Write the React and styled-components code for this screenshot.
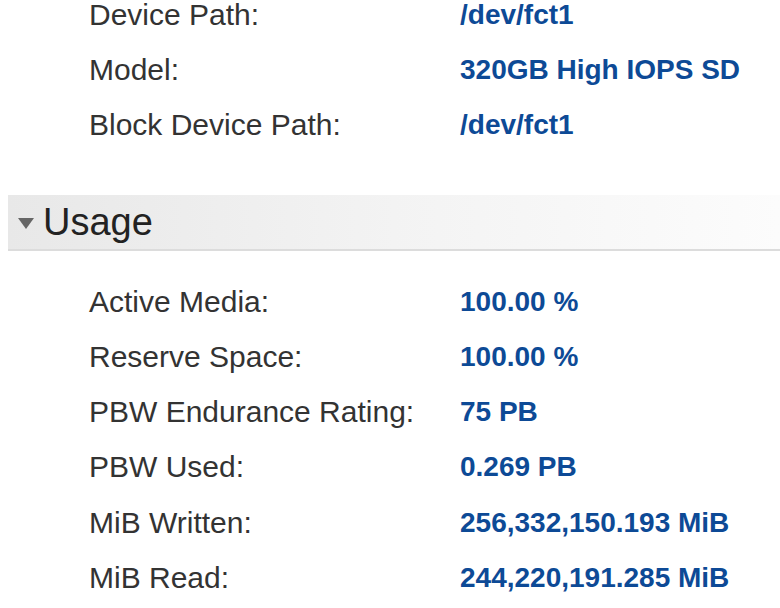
import React from "react";
import styled, { createGlobalStyle } from "styled-components";

const GlobalStyle = createGlobalStyle`
  html, body {
    margin: 0;
    padding: 0;
    background: #ffffff;
    font-family: "Liberation Sans", Arial, sans-serif;
  }
`;

const Page = styled.div`
  width: 780px;
  height: 608px;
  overflow: hidden;
  margin-top: -13px;
`;

const PropList = styled.div`
  display: flex;
  flex-direction: column;
  padding-left: 89px;
  margin-bottom: ${(p) => p.gapAfter || 0}px;
`;

const PropRow = styled.div`
  display: grid;
  grid-template-columns: 371px 1fr;
  height: 55.3px;
  align-items: center;
`;

const Label = styled.span`
  font-size: 30px;
  color: #333333;
  white-space: nowrap;
`;

const Value = styled.span`
  font-size: 28px;
  font-weight: bold;
  color: #0d4a96;
  white-space: nowrap;
`;

const SectionHeader = styled.div`
  display: flex;
  align-items: center;
  margin-left: 8px;
  height: 54px;
  border-bottom: 2px solid #dcdcdc;
  background: linear-gradient(to right, #e8e8e8 0%, #f3f3f3 50%, #fcfcfc 100%);
  margin-bottom: 23px;
`;

const Caret = styled.span`
  width: 0;
  height: 0;
  margin-left: 10px;
  margin-right: 9px;
  margin-top: 3px;
  border-left: 8px solid transparent;
  border-right: 8px solid transparent;
  border-top: 11px solid #666666;
`;

const SectionTitle = styled.span`
  font-size: 38px;
  color: #222222;
  line-height: 1;
`;

const device = [
  ["Device Path:", "/dev/fct1"],
  ["Model:", "320GB High IOPS SD"],
  ["Block Device Path:", "/dev/fct1"],
];

const usage = [
  ["Active Media:", "100.00 %"],
  ["Reserve Space:", "100.00 %"],
  ["PBW Endurance Rating:", "75 PB"],
  ["PBW Used:", "0.269 PB"],
  ["MiB Written:", "256,332,150.193 MiB"],
  ["MiB Read:", "244,220,191.285 MiB"],
];

function Props({ rows, gapAfter }) {
  return (
    <PropList gapAfter={gapAfter}>
      {rows.map(([k, v]) => (
        <PropRow key={k}>
          <Label>{k}</Label>
          <Value>{v}</Value>
        </PropRow>
      ))}
    </PropList>
  );
}

export default function App() {
  return (
    <Page>
      <GlobalStyle />
      <Props rows={device} gapAfter={42} />
      <SectionHeader>
        <Caret />
        <SectionTitle>Usage</SectionTitle>
      </SectionHeader>
      <Props rows={usage} />
    </Page>
  );
}
